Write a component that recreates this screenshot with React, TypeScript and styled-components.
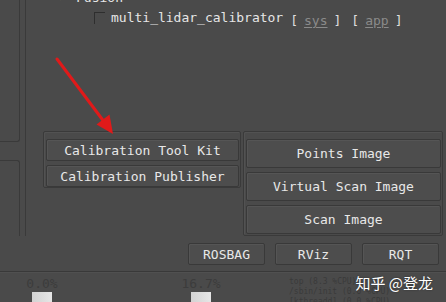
import styled, { createGlobalStyle } from "styled-components";

const GlobalStyle = createGlobalStyle`
    html, body {
        margin: 0;
        padding: 0;
        background: #4a4a4a;
    }
    * {
        box-sizing: border-box;
    }
`;

const calibrationButtons = ["Calibration Tool Kit", "Calibration Publisher"];
const imageButtons = ["Points Image", "Virtual Scan Image", "Scan Image"];
const toolButtons = ["ROSBAG", "RViz", "RQT"];
const meters = [
    { label: "0.0%" },
    { label: "16.7%" },
];
const processes = ["top (8.3 %CPU)", "/sbin/init (0.0 %CPU)", "[kthreadd] (0.0 %CPU)"];

const App = () => {
    return (
        <Page>
            <GlobalStyle />
            <TopSection>
                <LeftRail>
                    <RailPanelTop />
                    <RailPanelBottom />
                </LeftRail>
                <Main>
                    <Tree>
                        <TreeRow $indent={31}>
                            <Expander>▾</Expander>
                            <span>Fusion</span>
                        </TreeRow>
                        <TreeRow $indent={68}>
                            <Branch><BranchLine /></Branch>
                            <span>multi_lidar_calibrator</span>
                            <Links>
                                <LinkGroup>
                                    <Bracket>[</Bracket>
                                    <LinkText>sys</LinkText>
                                    <Bracket>]</Bracket>
                                </LinkGroup>
                                <LinkGroup>
                                    <Bracket>[</Bracket>
                                    <LinkText>app</LinkText>
                                    <Bracket>]</Bracket>
                                </LinkGroup>
                            </Links>
                        </TreeRow>
                    </Tree>
                    <GroupsRow>
                        <CalibrationGroup>
                            {calibrationButtons.map((label) => (
                                <PushButton key={label} $height={22}>{label}</PushButton>
                            ))}
                        </CalibrationGroup>
                        <ImageGroup>
                            {imageButtons.map((label) => (
                                <PushButton key={label} $height={29}>{label}</PushButton>
                            ))}
                        </ImageGroup>
                    </GroupsRow>
                </Main>
            </TopSection>

            <ActionBar>
                {toolButtons.map((label) => (
                    <ToolButton key={label}>{label}</ToolButton>
                ))}
            </ActionBar>

            <Divider />

            <Stats>
                {meters.map((m) => (
                    <Meter key={m.label}>
                        <MeterLabel>{m.label}</MeterLabel>
                        <MeterBar />
                    </Meter>
                ))}
                <ProcessList>
                    {processes.map((p) => (
                        <div key={p}>{p}</div>
                    ))}
                </ProcessList>
            </Stats>

            {/* annotation overlays */}
            <Arrow width="446" height="302" viewBox="0 0 446 302">
                <line x1="57" y1="59" x2="105" y2="123" stroke="#e01a1a" strokeWidth="3" strokeLinecap="round" />
                <polygon points="113,134 96.5,124.5 109.5,114.5" fill="#e01a1a" />
            </Arrow>
            <Watermark>知乎 @登龙</Watermark>
        </Page>
    );
};

const Page = styled.div`
    position: relative;
    width: 446px;
    height: 302px;
    overflow: hidden;
    display: flex;
    flex-direction: column;
    background: #4a4a4a;
    font-family: "DejaVu Sans Mono", "Liberation Mono", monospace;
    font-size: 13px;
    color: #e6e6e6;
`;

/**************** TOP *************************/
const TopSection = styled.div`
    display: flex;
    height: 236px;
    flex-shrink: 0;
`;

const LeftRail = styled.div`
    width: 20px;
    display: flex;
    flex-direction: column;
    gap: 18px;
`;

const RailPanelTop = styled.div`
    height: 142px;
    border-right: 1px solid #3a3a3a;
    border-bottom: 1px solid #3a3a3a;
    border-bottom-right-radius: 3px;
`;

const RailPanelBottom = styled.div`
    flex: 1;
    border-right: 1px solid #3a3a3a;
    border-top: 1px solid #3a3a3a;
    border-top-right-radius: 3px;
`;

const Main = styled.div`
    flex: 1;
    margin-left: 5px;
    border-left: 1px solid #3a3a3a;
    display: flex;
    flex-direction: column;
`;

/**************** TREE *************************/
const Tree = styled.div`
    margin-top: -12px;
    height: 143px;
    display: flex;
    flex-direction: column;
`;

const TreeRow = styled.div<{ $indent: number }>`
    display: flex;
    align-items: flex-start;
    height: 20px;
    line-height: 20px;
    padding-left: ${(p) => p.$indent}px;
    white-space: nowrap;
`;

const Expander = styled.span`
    width: 19px;
    font-size: 11px;
    color: #dcdcdc;
`;

const Branch = styled.span`
    width: 17px;
    height: 20px;
    display: flex;
    align-items: flex-start;
`;

const BranchLine = styled.span`
    width: 11px;
    height: 12px;
    margin-top: 4px;
    border-top: 1px solid #2e2e2e;
    border-left: 1px solid #2e2e2e;
`;

const Links = styled.span`
    display: flex;
    gap: 10px;
    margin-left: 7px;
    margin-top: 3px;
`;

const LinkGroup = styled.span`
    display: flex;
    gap: 6px;
`;

const Bracket = styled.span`
    color: #dedede;
`;

const LinkText = styled.span`
    color: #8a8a8a;
    text-decoration: underline;
    text-underline-offset: 2px;
`;

/**************** GROUPS *************************/
const GroupsRow = styled.div`
    display: flex;
    align-items: flex-start;
    gap: 2px;
    padding-left: 17px;
`;

const GroupBox = styled.div`
    display: flex;
    flex-direction: column;
    gap: 4px;
    padding: 7px 1px 1px 2px;
    border: 1px solid #3a3a3a;
    border-radius: 2px;
    box-shadow: inset 1px 1px 0 #525252;
`;

const CalibrationGroup = styled(GroupBox)`
    width: 198px;
    padding-bottom: 0;
`;

const ImageGroup = styled(GroupBox)`
    width: 200px;
`;

const PushButton = styled.div<{ $height: number }>`
    height: ${(p) => p.$height}px;
    display: flex;
    align-items: center;
    justify-content: center;
    background: #4d4d4d;
    border: 1px solid #393939;
    border-radius: 2px;
    box-shadow: inset 1px 1px 0 #555555;
    color: #e8e8e8;
    white-space: nowrap;
`;

/**************** ACTIONS *************************/
const ActionBar = styled.div`
    display: flex;
    justify-content: flex-end;
    gap: 10px;
    margin-top: 7px;
    padding-right: 7px;
`;

const ToolButton = styled(PushButton).attrs({ $height: 22 })`
    width: 77px;
`;

const Divider = styled.div`
    margin-top: 6px;
    height: 2px;
    border-top: 1px solid #393939;
    border-bottom: 1px solid #505050;
    flex-shrink: 0;
`;

/**************** STATS *************************/
const Stats = styled.div`
    display: flex;
    align-items: flex-start;
    gap: 99px;
    padding: 4px 0 0 12px;
`;

const Meter = styled.div`
    width: 60px;
    display: flex;
    flex-direction: column;
    align-items: center;
`;

const MeterLabel = styled.div`
    height: 14px;
    line-height: 14px;
    color: #3c3c3c;
`;

const MeterBar = styled.div`
    width: 20px;
    height: 14px;
    margin-top: 1px;
    background: linear-gradient(to right, #d2d2d2, #e6e6e6);
`;

const ProcessList = styled.div`
    margin-left: -41px;
    font-size: 8px;
    line-height: 10px;
    color: #3a3a3a;
    white-space: nowrap;
`;

/**************** OVERLAYS *************************/
const Arrow = styled.svg`
    position: absolute;
    left: 0;
    top: 0;
    pointer-events: none;
`;

const Watermark = styled.div`
    position: absolute;
    right: 13px;
    top: 272px;
    font-family: "Noto Sans CJK SC", "Noto Sans", sans-serif;
    font-size: 15px;
    color: #ffffff;
    text-shadow: 0 0 2px rgba(0, 0, 0, 0.4);
    white-space: nowrap;
`;

export default App;
